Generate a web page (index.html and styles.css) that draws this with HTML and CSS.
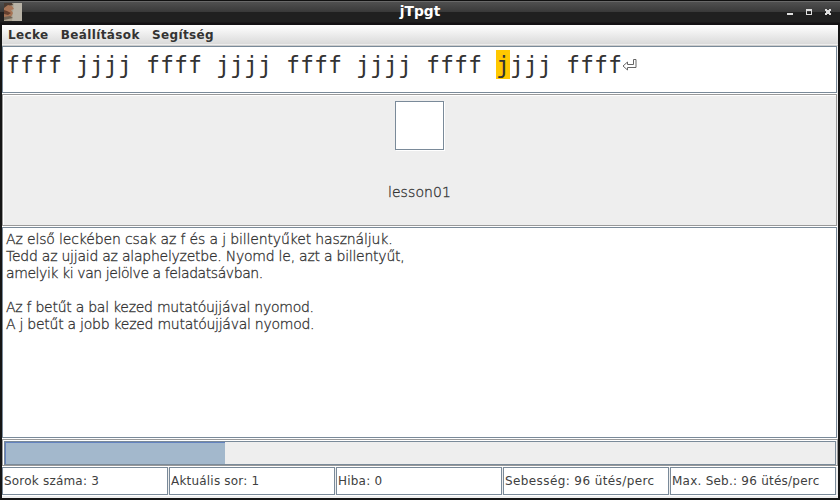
FILE: index.html
```
<!DOCTYPE html>
<html lang="hu">
<head>
<meta charset="utf-8">
<title>jTpgt</title>
<link rel="stylesheet" href="styles.css">
</head>
<body>
<div class="window">
  <header class="titlebar">
    <svg class="app-icon" width="18" height="18" viewBox="0 0 18 18">
      <rect width="18" height="18" fill="#a9a08f"/>
      <path d="M10 0h8v18H8z" fill="#b8b2a6"/>
      <path d="M0 0h8l1 2-4 1-5 3z" fill="#4b3b31"/>
      <path d="M0 5l4-3 4 1 2 3-3 1 2 3-2 4-7 1z" fill="#a77456"/>
      <path d="M0 7l3 1 4 2-3 2-4-1z" fill="#64402f"/>
      <path d="M0 14l6-1 3 2-9 2z" fill="#6d6254"/>
    </svg>
    <span class="title">jTpgt</span>
    <svg class="controls" width="46" height="8" viewBox="0 0 46 8" shape-rendering="crispEdges" fill="#dedede">
      <path d="M1 5h6v2H1z"/>
      <path fill-rule="evenodd" d="M20 1h6v6h-6zM21 3v3h4V3z"/>
      <path d="M39 1h2v1h2V1h2v2h-1v2h1v2h-2V6h-2v1h-2V5h1V3h-1z"/>
    </svg>
  </header>
  <main class="content">
    <nav class="menu"><span>Lecke</span><span>Beállítások</span><span>Segítség</span></nav>
    <div class="exercise sunken"><span>ffff jjjj ffff jjjj ffff jjjj ffff </span><mark>j</mark><span>jjj ffff</span><svg class="enter" width="15" height="14" viewBox="0 0 15 14"><path d="M11.500 1.500h2.500v8h-8.500v2.500l-4.500-4 4.500-4v2.500h6z" fill="#fff" stroke="#666" stroke-width="1"/></svg></div>
    <section class="lesson etched"><div class="key sunken"></div><div class="name">lesson01</div></section>
    <section class="description sunken">
      <div class="l1">Az első leckében csak az f és a j billentyűket használjuk.</div>
      <div class="l2">Tedd az ujjaid az alaphelyzetbe. Nyomd le, azt a billentyűt,</div>
      <div class="l3">amelyik ki van jelölve a feladatsávban.</div>
      <div class="blank"></div>
      <div class="l5">Az f betűt a bal kezed mutatóujjával nyomod.</div>
      <div class="l5">A j betűt a jobb kezed mutatóujjával nyomod.</div>
    </section>
    <div class="progress etched"><div class="track"><div class="bar"></div></div></div>
    <footer class="status"><div class="sunken">Sorok száma: 3</div><div class="sunken">Aktuális sor: 1</div><div class="sunken">Hiba: 0</div><div class="sunken speed">Sebesség: 96 ütés/perc</div><div class="sunken max">Max. Seb.: 96 ütés/perc</div></footer>
  </main>
</div>
</body>
</html>
```
FILE: styles.css
```
* { box-sizing: border-box; }
body { margin: 0; font-family: "DejaVu Sans", sans-serif; color: #333; }
.window { width: 840px; height: 500px; background: #151515; padding: 0 2px 2px; overflow: hidden; }
.titlebar {
  height: 25px; margin: 0 -2px; padding: 3px 8px 4px 4px;
  display: grid; grid-template-columns: 46px 1fr 46px; align-items: center;
  background: linear-gradient(#101010 0 1px, #696969 1px 2px, #505050 2px, #393939 12px, #202020 12px, #202020 22px, #141214 23px);
}
.app-icon { display: block; }
.title { text-align: center; font-weight: bold; font-size: 13.8px; line-height: 18px; color: #fff; margin: -2px 0 0 4px; }
.controls { display: block; }
.content { width: 836px; height: 473px; background: #eee; display: flex; flex-direction: column; }
.menu {
  height: 21px; flex: none; display: flex; gap: 12.2px; padding: 2px 6px;
  font-weight: bold; font-size: 12px; line-height: 16px; letter-spacing: .37px;
  background: linear-gradient(#fff, #dadada 19px, #eee 19px 20px, #ccc 20px);
}
.sunken { border: 1px solid #7a8a99; background: #fff; }
.exercise {
  height: 47px; flex: none; margin: 0 1px 1px 0; padding: 3px 3px; display: flex; align-items: flex-start;
  font-family: "DejaVu Sans Mono", monospace; font-size: 23.25px; line-height: 29px; white-space: pre;
  box-shadow: 0 1px #fff;
}
.exercise mark { background: #ffc800; color: #333; }
.enter { margin-top: 8px; }
.etched { border: 1px solid #999; box-shadow: inset 1px 1px #fff, 0 1px #fff; }
.lesson { height: 132px; flex: none; margin: 0 1px 1px 0; padding-top: 6px; display: flex; flex-direction: column; align-items: center; }
.key { width: 49px; height: 49px; box-shadow: 1px 1px #fff; }
.name { margin-top: 34px; font-size: 14px; line-height: 17px; letter-spacing: .1px; }
.name, .description { font-weight: 200; -webkit-text-stroke: .3px #333; }
.description {
  height: 211px; flex: none; margin-right: 1px; padding: 3px; white-space: nowrap;
  font-size: 14px; line-height: 17px; box-shadow: 0 1px #fff;
}
.l1 { letter-spacing: -.14px; }
.l2 { letter-spacing: -.24px; }
.l3 { letter-spacing: -.42px; }
.blank { height: 17px; }
.l5 { letter-spacing: -.26px; }
.progress { height: 27px; flex: none; margin: 1px 0; padding: 1px; }
.track { height: 24px; border: 1px solid #7a8a99; }
.bar { height: 22px; width: 220px; background: #a3b8cc; border-top: 1px solid #6382bf; border-left: 1px solid #6382bf; }
.status { display: grid; grid-template-columns: repeat(5, 166px); gap: 1px; height: 28px; font-size: 12px; line-height: 27px; letter-spacing: .2px; color: #404040; box-shadow: 0 1px #fff; }
.status div { padding-left: 1px; height: 28px; white-space: pre; }
.status .speed { letter-spacing: .4px; }
.status .max { letter-spacing: .24px; }
```
